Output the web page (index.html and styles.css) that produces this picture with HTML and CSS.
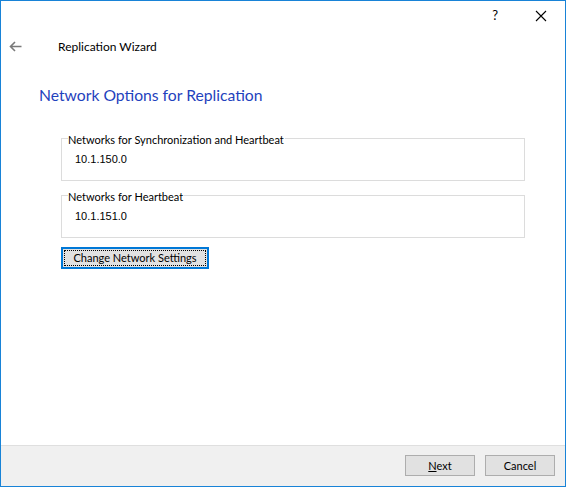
FILE: index.html
```html
<!DOCTYPE html>
<html>
<head>
<meta charset="utf-8">
<link rel="stylesheet" href="styles.css">
</head>
<body>
<div class="window">
  <div class="titlebar">
    <span class="help">?</span>
    <svg class="close" width="12" height="12" viewBox="0 0 12 12"><path d="M1 1 L11 11 M11 1 L1 11" stroke="#000" stroke-width="1.1" fill="none"/></svg>
  </div>
  <div class="header">
    <svg class="back" width="13" height="11" viewBox="0 0 13 11"><path d="M12.5 5.5 H1.5 M6 1 L1.5 5.5 L6 10" stroke="#7a7a7a" stroke-width="1.6" fill="none"/></svg>
    <span class="wiztitle">Replication Wizard</span>
  </div>
  <div class="content">
    <h1 class="heading">Network Options for Replication</h1>
    <div class="groups">
      <div class="group">
        <span class="legend">Networks for Synchronization and Heartbeat</span>
        <div class="ip">10.1.150.0</div>
      </div>
      <div class="group">
        <span class="legend">Networks for Heartbeat</span>
        <div class="ip">10.1.151.0</div>
      </div>
      <button class="btn focus"><span class="focusrect">Change Network Settings</span></button>
    </div>
  </div>
  <div class="footer">
    <button class="btn wide"><u>N</u>ext</button>
    <button class="btn wide">Cancel</button>
  </div>
</div>
</body>
</html>
```
FILE: styles.css
```css
html, body {
  margin: 0;
  padding: 0;
  background: #fff;
}
.window {
  width: 566px;
  height: 487px;
  box-sizing: border-box;
  border: 1px solid #1883d7;
  display: flex;
  flex-direction: column;
  background: #fff;
  font-family: Lato, "Liberation Sans", sans-serif;
  font-size: 11px;
  color: #000;
}
.titlebar {
  height: 30px;
  display: flex;
  align-items: center;
  justify-content: flex-end;
  flex-shrink: 0;
}
.help {
  font-size: 13px;
  margin-right: 37px;
  margin-top: -3px;
}
.close {
  margin-right: 18px;
}
.header {
  height: 30px;
  display: flex;
  align-items: center;
  flex-shrink: 0;
}
.back {
  margin-left: 8px;
}
.wiztitle {
  margin-left: 36px;
  font-size: 12px;
}
.content {
  flex: 1;
  padding-left: 38px;
}
.heading {
  margin: 23px 0 0 0;
  font-weight: normal;
  font-size: 15.7px;
  color: #1f42bd;
  line-height: 22px;
}
.groups {
  margin-left: 22px;
  margin-top: 32px;
  display: flex;
  flex-direction: column;
  align-items: flex-start;
}
.group {
  position: relative;
  width: 464px;
  height: 43px;
  box-sizing: border-box;
  border: 1px solid #dcdcdc;
  margin-bottom: 14px;
}
.group + .group {
  margin-bottom: 9px;
}
.legend {
  position: absolute;
  left: 6px;
  top: -6px;
  background: #fff;
  padding: 0 1px 0 0;
  line-height: 14px;
  font-size: 11px;
}
.ip {
  margin: 13px 0 0 13px;
  font-family: "Liberation Sans", sans-serif;
  font-size: 11px;
  line-height: 14px;
}
.btn {
  font-family: Lato, "Liberation Sans", sans-serif;
  font-size: 11px;
  background: #e1e1e1;
  border: 1px solid #adadad;
  padding: 0;
  margin: 0;
  color: #000;
  box-sizing: border-box;
  white-space: nowrap;
  text-align: center;
}
.btn.focus {
  width: 148px;
  height: 22px;
  border: 2px solid #0078d7;
  padding: 1px;
  display: flex;
}
.focusrect {
  flex: 1;
  border: 1px dotted #000;
  line-height: 14px;
}
.footer {
  height: 41px;
  flex-shrink: 0;
  box-sizing: border-box;
  border-top: 1px solid #dfdfdf;
  background: #f0f0f0;
  display: flex;
  justify-content: flex-end;
  align-items: flex-start;
  padding: 9px 10px 0 0;
  gap: 10px;
}
.btn.wide {
  width: 70px;
  height: 21px;
  line-height: 17px;
}
```
